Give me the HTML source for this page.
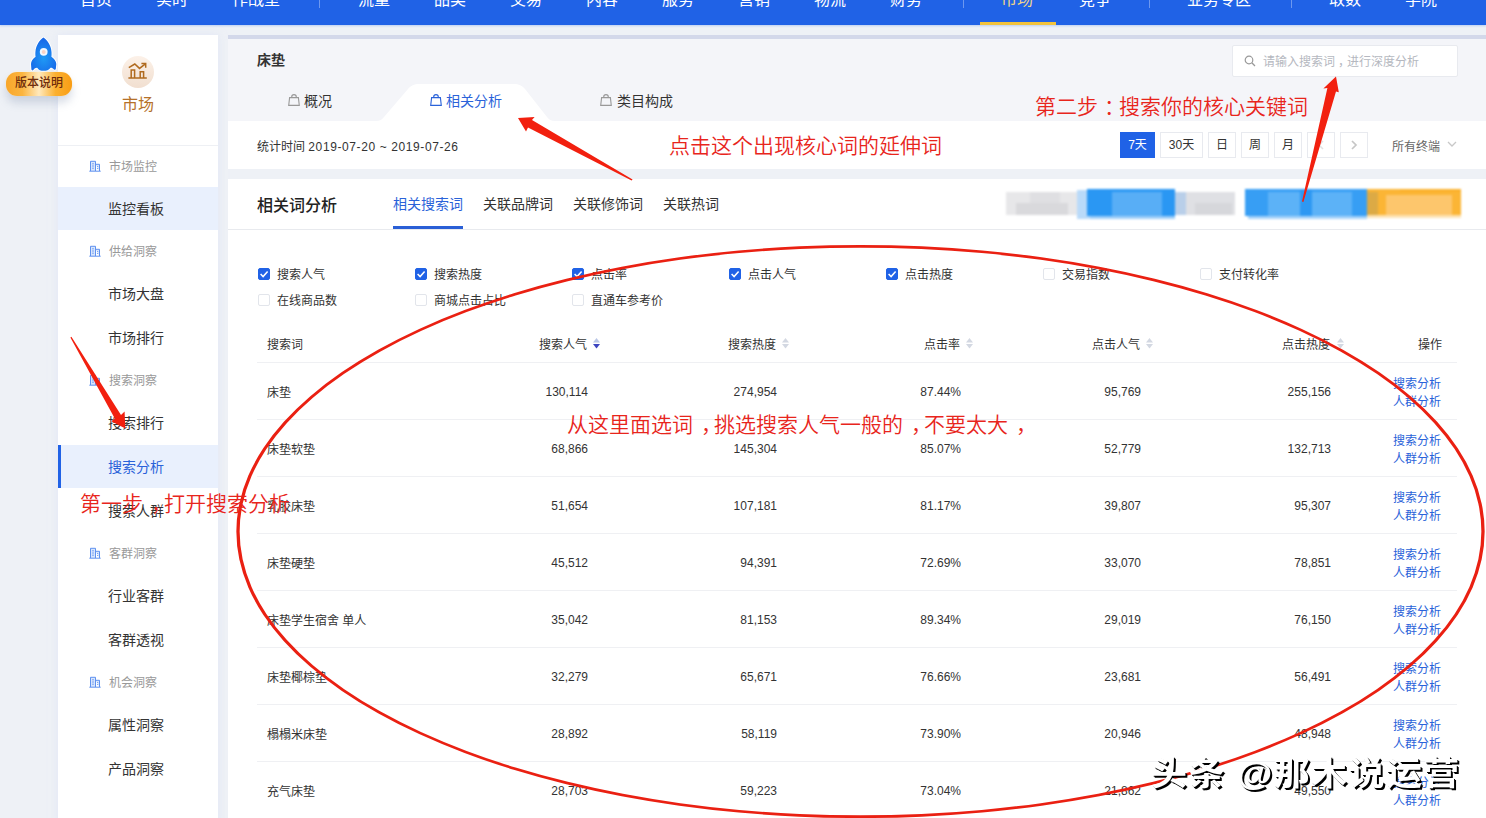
<!DOCTYPE html>
<html lang="zh-CN">
<head>
<meta charset="utf-8">
<title>搜索分析</title>
<style>
*{box-sizing:border-box;margin:0;padding:0}
html,body{width:1486px;height:818px;overflow:hidden}
body{position:relative;background:#eef1f6;font-family:"Liberation Sans","Noto Sans CJK SC",sans-serif;font-size:12px;color:#333;}
.abs{position:absolute;white-space:nowrap}
/* top nav */
#nav{position:absolute;left:0;top:0;width:1486px;height:25px;background:#2062e6;overflow:hidden;box-shadow:0 1px 2px rgba(32,98,230,.25)}
#nav span{position:absolute;top:-12px;font-size:16px;line-height:24px;color:#fff;white-space:nowrap}
#nav i{position:absolute;top:-7px;width:1px;height:15px;background:rgba(255,255,255,.35)}
#nav b{position:absolute;left:980px;top:22px;width:76px;height:3px;background:#f3c33c}
/* sidebar */
#side{position:absolute;left:58px;top:35px;width:160px;height:790px;background:#fff;box-shadow:0 0 8px rgba(215,223,245,.55)}
#side .grp{position:absolute;left:51px;font-size:12px;color:#999;line-height:16px;white-space:nowrap}
#side .it{position:absolute;left:0;width:160px;height:43px;line-height:45px;font-size:14px;color:#333;padding-left:50px;white-space:nowrap}
#side .it.hl{background:#e9f0fd}
#side .it.act{background:#e9f0fd;color:#2a62d9;border-left:3px solid #2062e6;padding-left:47px}
#side svg.gi{position:absolute;left:31px;width:12px;height:12px}

#side .mk{position:absolute;left:64px;top:21px;width:32px;height:32px;border-radius:50%;background:linear-gradient(180deg,#fcf1e8,#f1dfd0)}
#side .mkt{position:absolute;left:0;width:160px;top:58px;text-align:center;font-size:16px;line-height:24px;color:#b5712a}
#side .sdiv{position:absolute;left:0;top:110px;width:160px;height:1px;background:#eef0f4}

#p1 .strip{position:absolute;left:0;top:0;width:100%;height:4px;background:#d3d8ea}
#p1 .hd{position:absolute;left:0;top:4px;width:100%;height:82px;background:#f4f5f9}
#p1 .sb{position:absolute;left:1004px;top:10px;width:226px;height:32px;border:1px solid #e8eaef;background:#fff;border-radius:2px}
#p1 .sb span{position:absolute;left:30px;top:7px;font-size:12px;line-height:18px;color:#b5b8c0;white-space:nowrap}
.btn.on{background:#2062e6;border-color:#2062e6;color:#fff}

.blur{filter:blur(.9px)}
.blur i{position:absolute;top:3px;height:24px}

#badge{position:absolute;left:6px;top:72px;width:66px;height:24px;border-radius:11px;background:linear-gradient(90deg,#f8a62a 0%,#fbb540 25%,#ffe9bd 50%,#fbb030 75%,#f99d14 100%);box-shadow:0 7px 8px rgba(120,135,170,.28),0 0 2px rgba(255,240,200,.9)}
#badge span{position:absolute;left:0;width:66px;top:3px;text-align:center;font-size:12px;line-height:16px;color:#6e2c0c;font-weight:500}
#wm{transform:scaleY(.91);transform-origin:0 41px;position:absolute;left:1151px;top:749px;font-size:36px;line-height:48px;font-weight:700;letter-spacing:1.4px;color:#fff;text-shadow:2px 2px 0 #000,1px 1px 0 #000;white-space:nowrap}
.td.lnk{color:#2a62d9}
/* panels */
.panel{position:absolute;left:228px;width:1270px;background:#fff}
.lnk{color:#2a62d9}
.red{position:absolute;white-space:nowrap;color:#e8251c;font-family:"Liberation Sans","Noto Sans CJK SC",sans-serif;font-weight:350;font-size:21px;line-height:28px}
.tc{position:relative;left:8px}
.cb{position:absolute;width:12px;height:12px;border:1px solid #e2e5eb;border-radius:2px;background:#fff}
.cb.on{background:#2062e6;border-color:#2062e6}
.cbl{position:absolute;font-size:12px;line-height:16px;color:#333;white-space:nowrap}
.th{position:absolute;top:335px;font-size:12px;line-height:16px;color:#333;white-space:nowrap}
.td{position:absolute;font-size:12px;line-height:16px;color:#333;white-space:nowrap;text-align:right}
.hr{position:absolute;left:257px;width:1200px;height:1px;background:#eff0f3}
.btn{position:absolute;height:26px;line-height:25px;border:1px solid #e8eaef;background:#fff;text-align:center;font-size:12px;color:#333}
</style>
</head>
<body>
<div id="nav">
<span style="left:80px">首页</span><span style="left:156px">实时</span><span style="left:232px">作战室</span><i style="left:319px"></i>
<span style="left:358px">流量</span><span style="left:434px">品类</span><span style="left:510px">交易</span><span style="left:586px">内容</span><span style="left:662px">服务</span><span style="left:738px">营销</span><span style="left:814px">物流</span><span style="left:890px">财务</span><i style="left:963px"></i>
<span style="left:1001px;color:#f0d68a">市场</span><span style="left:1079px">竞争</span><i style="left:1149px"></i><span style="left:1187px">业务专区</span><i style="left:1291px"></i><span style="left:1329px">取数</span><span style="left:1405px">学院</span>
<b></b>
</div>

<div id="side">
<div class="mk"></div>
<svg class="mki" viewBox="126 60 24 22" style="position:absolute;left:68px;top:25px;width:24px;height:22px"><g fill="none" stroke="#b06a1e" stroke-width="1.5"><path d="M128.4 78H146.8"/><path d="M131.2 78V69.9H134.6V78M140.2 78V71.7H143.6V78"/><path d="M128.8 67.7L134.8 64 139.5 68.4 145.4 63.8"/><path d="M141.4 63.5H145.7V67.8"/></g></svg>
<div class="mkt">市场</div>
<div class="sdiv"></div>
<svg class="gi" viewBox="0 0 12 12" style="top:125px"><path d="M1.5 11V1.3h5V11M6.5 4.3h4V11M0.3 11.2h11.4" fill="#d9e6fc" stroke="#5f92ef" stroke-width="1"/><path d="M3 3.8h2M3 6h2M3 8.2h2M8 6.5h1.2M8 8.5h1.2" stroke="#6f9df2" stroke-width=".9"/></svg>
<div class="grp" style="top:124px">市场监控</div>
<svg class="gi" viewBox="0 0 12 12" style="top:210px"><path d="M1.5 11V1.3h5V11M6.5 4.3h4V11M0.3 11.2h11.4" fill="#d9e6fc" stroke="#5f92ef" stroke-width="1"/><path d="M3 3.8h2M3 6h2M3 8.2h2M8 6.5h1.2M8 8.5h1.2" stroke="#6f9df2" stroke-width=".9"/></svg>
<div class="grp" style="top:209px">供给洞察</div>
<svg class="gi" viewBox="0 0 12 12" style="top:339px"><path d="M1.5 11V1.3h5V11M6.5 4.3h4V11M0.3 11.2h11.4" fill="#d9e6fc" stroke="#5f92ef" stroke-width="1"/><path d="M3 3.8h2M3 6h2M3 8.2h2M8 6.5h1.2M8 8.5h1.2" stroke="#6f9df2" stroke-width=".9"/></svg>
<div class="grp" style="top:338px">搜索洞察</div>
<svg class="gi" viewBox="0 0 12 12" style="top:512px"><path d="M1.5 11V1.3h5V11M6.5 4.3h4V11M0.3 11.2h11.4" fill="#d9e6fc" stroke="#5f92ef" stroke-width="1"/><path d="M3 3.8h2M3 6h2M3 8.2h2M8 6.5h1.2M8 8.5h1.2" stroke="#6f9df2" stroke-width=".9"/></svg>
<div class="grp" style="top:511px">客群洞察</div>
<svg class="gi" viewBox="0 0 12 12" style="top:641px"><path d="M1.5 11V1.3h5V11M6.5 4.3h4V11M0.3 11.2h11.4" fill="#d9e6fc" stroke="#5f92ef" stroke-width="1"/><path d="M3 3.8h2M3 6h2M3 8.2h2M8 6.5h1.2M8 8.5h1.2" stroke="#6f9df2" stroke-width=".9"/></svg>
<div class="grp" style="top:640px">机会洞察</div>
<div class="it hl" style="top:152px">监控看板</div>
<div class="it " style="top:237px">市场大盘</div>
<div class="it " style="top:281px">市场排行</div>
<div class="it " style="top:366px">搜索排行</div>
<div class="it act" style="top:410px">搜索分析</div>
<div class="it " style="top:454px">搜索人群</div>
<div class="it " style="top:539px">行业客群</div>
<div class="it " style="top:583px">客群透视</div>
<div class="it " style="top:668px">属性洞察</div>
<div class="it " style="top:712px">产品洞察</div>
</div>
<div class="panel" id="p1" style="top:35px;height:134px">
<div class="strip"></div><div class="hd"></div>
<div class="abs" style="left:29px;top:14px;font-size:14px;line-height:22px;font-weight:bold;color:#333">床垫</div>
<svg style="position:absolute;left:140px;top:48px;width:200px;height:38px" viewBox="0 0 200 38"><path d="M8 38 C12 38 14 36.5 16 34 L40 6 C43 2.5 46 1 51 1 L146 1 C151 1 154 2.5 157 6 L179 34 C181 36.5 183 38 187 38 Z" fill="#fff"/></svg>
<svg viewBox="0 0 12 12" style="position:absolute;left:59.5px;top:58.8px;width:12px;height:12px"><path d="M1.6 3.6h8.8l.9 7.8H.7z M3.7 3.6V2.9a2.3 2.3 0 0 1 4.6 0v.7" fill="none" stroke="#999" stroke-width="1.1"/></svg>
<div class="abs" style="left:76px;top:55px;font-size:14px;line-height:22px;color:#333">概况</div>
<svg viewBox="0 0 12 12" style="position:absolute;left:201.5px;top:58.8px;width:12px;height:12px"><path d="M1.6 3.6h8.8l.9 7.8H.7z M3.7 3.6V2.9a2.3 2.3 0 0 1 4.6 0v.7" fill="none" stroke="#2a62d9" stroke-width="1.1"/></svg>
<div class="abs" style="left:218px;top:55px;font-size:14px;line-height:22px;color:#2a62d9">相关分析</div>
<svg viewBox="0 0 12 12" style="position:absolute;left:371.5px;top:58.8px;width:12px;height:12px"><path d="M1.6 3.6h8.8l.9 7.8H.7z M3.7 3.6V2.9a2.3 2.3 0 0 1 4.6 0v.7" fill="none" stroke="#999" stroke-width="1.1"/></svg>
<div class="abs" style="left:389px;top:55px;font-size:14px;line-height:22px;color:#333">类目构成</div>
<div class="abs" style="left:29px;top:103px;font-size:12px;line-height:18px;color:#333">统计时间 <span style="letter-spacing:.6px">2019-07-20 ~ 2019-07-26</span></div>
<div class="sb"><svg viewBox="0 0 12 12" style="position:absolute;left:10.5px;top:9px;width:12px;height:12px"><circle cx="5" cy="5" r="3.8" fill="none" stroke="#999" stroke-width="1.2"/><path d="M7.8 7.8l3.2 3.2" stroke="#999" stroke-width="1.3"/></svg><span>请输入搜索词<b style="font-weight:normal;position:relative;left:3px">，</b>进行深度分析</span></div>
<div class="btn on" style="left:892px;top:97px;width:35px">7天</div>
<div class="btn " style="left:932px;top:97px;width:43px">30天</div>
<div class="btn " style="left:980px;top:97px;width:28px">日</div>
<div class="btn " style="left:1013px;top:97px;width:28px">周</div>
<div class="btn " style="left:1046px;top:97px;width:28px">月</div>
<div class="btn dis" style="left:1079px;top:97px;width:28px"></div>
<div class="btn dis" style="left:1112px;top:97px;width:28px"></div>
<svg style="position:absolute;left:1089px;top:105px;width:8px;height:10px" viewBox="0 0 8 10"><path d="M6 1L2 5l4 4" fill="none" stroke="#e2e2e2" stroke-width="1.6"/></svg>
<svg style="position:absolute;left:1122px;top:105px;width:8px;height:10px" viewBox="0 0 8 10"><path d="M2 1l4 4-4 4" fill="none" stroke="#c6c6c6" stroke-width="1.7"/></svg>
<div class="abs" style="left:1164px;top:103px;font-size:12px;line-height:18px;color:#666">所有终端</div>
<svg style="position:absolute;left:1219px;top:106px;width:10px;height:7px" viewBox="0 0 10 7"><path d="M1 1l4 4 4-4" fill="none" stroke="#c8c8c8" stroke-width="1.3"/></svg>
</div>
<div class="panel" id="p2" style="top:179px;height:650px">
<div class="abs" style="left:29px;top:15px;font-size:16px;line-height:24px;font-weight:500;color:#222">相关词分析</div>
<div class="abs" style="left:165px;top:14px;font-size:14px;line-height:22px;color:#2a62d9">相关搜索词</div>
<div class="abs" style="left:255px;top:14px;font-size:14px;line-height:22px;color:#333">关联品牌词</div>
<div class="abs" style="left:345px;top:14px;font-size:14px;line-height:22px;color:#333">关联修饰词</div>
<div class="abs" style="left:435px;top:14px;font-size:14px;line-height:22px;color:#333">关联热词</div>
<div style="position:absolute;left:165px;top:47px;width:70px;height:3px;background:#2a5fd6"></div>
<div style="position:absolute;left:0;top:50px;width:100%;height:1px;background:#e8eaee"></div>
<svg class="blur" style="position:absolute;left:772px;top:5px;width:470px;height:40px" viewBox="1000 184 470 40"><rect x="1006" y="192" width="71" height="23" fill="#e7e7e9"/><rect x="1016" y="203" width="52" height="12" fill="#d9d9dc"/><rect x="1030" y="192" width="30" height="11" fill="#dfdfe2"/><rect x="1077" y="190" width="13" height="29" fill="#b9daf9"/><rect x="1087" y="189" width="88" height="27" fill="#2a97f3"/><rect x="1112" y="192" width="50" height="24" fill="#58aef6"/><rect x="1090" y="216" width="85" height="3" fill="#9fcff9"/><rect x="1175" y="192" width="60" height="23" fill="#dfe0e4"/><rect x="1175" y="192" width="11" height="23" fill="#b9cfe9"/><rect x="1195" y="203" width="37" height="12" fill="#d6d7db"/><rect x="1245" y="189" width="122" height="27" fill="#379ef4"/><rect x="1268" y="192" width="84" height="24" fill="#5cb2f7"/><rect x="1248" y="216" width="119" height="3" fill="#a6d3fa"/><rect x="1300" y="189" width="12" height="27" fill="#2d98f3"/><rect x="1367" y="189" width="94" height="26" fill="#fbb535"/><rect x="1386" y="195" width="66" height="20" fill="#fdc66c"/><rect x="1367" y="192" width="11" height="23" fill="#dcaa45"/><rect x="1400" y="189" width="61" height="3" fill="#fbb12c"/><rect x="1367" y="215" width="94" height="3" fill="#fde3b4"/></svg>
<div class="cb on" style="left:30px;top:89px"><svg viewBox="0 0 12 12" style="position:absolute;left:-1px;top:-1px;width:12px;height:12px"><path d="M2.6 6l2.5 2.6 4.5-5.2" fill="none" stroke="#fff" stroke-width="1.5"/></svg></div>
<div class="cbl" style="left:49px;top:88px">搜索人气</div>
<div class="cb on" style="left:187px;top:89px"><svg viewBox="0 0 12 12" style="position:absolute;left:-1px;top:-1px;width:12px;height:12px"><path d="M2.6 6l2.5 2.6 4.5-5.2" fill="none" stroke="#fff" stroke-width="1.5"/></svg></div>
<div class="cbl" style="left:206px;top:88px">搜索热度</div>
<div class="cb on" style="left:344px;top:89px"><svg viewBox="0 0 12 12" style="position:absolute;left:-1px;top:-1px;width:12px;height:12px"><path d="M2.6 6l2.5 2.6 4.5-5.2" fill="none" stroke="#fff" stroke-width="1.5"/></svg></div>
<div class="cbl" style="left:363px;top:88px">点击率</div>
<div class="cb on" style="left:501px;top:89px"><svg viewBox="0 0 12 12" style="position:absolute;left:-1px;top:-1px;width:12px;height:12px"><path d="M2.6 6l2.5 2.6 4.5-5.2" fill="none" stroke="#fff" stroke-width="1.5"/></svg></div>
<div class="cbl" style="left:520px;top:88px">点击人气</div>
<div class="cb on" style="left:658px;top:89px"><svg viewBox="0 0 12 12" style="position:absolute;left:-1px;top:-1px;width:12px;height:12px"><path d="M2.6 6l2.5 2.6 4.5-5.2" fill="none" stroke="#fff" stroke-width="1.5"/></svg></div>
<div class="cbl" style="left:677px;top:88px">点击热度</div>
<div class="cb" style="left:815px;top:89px"></div>
<div class="cbl" style="left:834px;top:88px">交易指数</div>
<div class="cb" style="left:972px;top:89px"></div>
<div class="cbl" style="left:991px;top:88px">支付转化率</div>
<div class="cb" style="left:30px;top:115px"></div>
<div class="cbl" style="left:49px;top:114px">在线商品数</div>
<div class="cb" style="left:187px;top:115px"></div>
<div class="cbl" style="left:206px;top:114px">商城点击占比</div>
<div class="cb" style="left:344px;top:115px"></div>
<div class="cbl" style="left:363px;top:114px">直通车参考价</div>
<div class="abs" style="left:39px;top:158px;font-size:12px;line-height:16px;color:#333">搜索词</div>
<div class="td" style="right:911px;top:158px">搜索人气</div>
<svg viewBox="0 0 7 10.5" style="position:absolute;left:365px;top:159px;width:7px;height:10.5px"><path d="M3.5 0L7 4.4H0z" fill="#b9c6e6"/><path d="M3.5 10.4L7 6H0z" fill="#3d46c0"/></svg>
<div class="td" style="right:722px;top:158px">搜索热度</div>
<svg viewBox="0 0 7 10.5" style="position:absolute;left:554px;top:159px;width:7px;height:10.5px"><path d="M3.5 0L7 4.4H0z" fill="#d3d8e2"/><path d="M3.5 10.4L7 6H0z" fill="#d3d8e2"/></svg>
<div class="td" style="right:538px;top:158px">点击率</div>
<svg viewBox="0 0 7 10.5" style="position:absolute;left:738px;top:159px;width:7px;height:10.5px"><path d="M3.5 0L7 4.4H0z" fill="#d3d8e2"/><path d="M3.5 10.4L7 6H0z" fill="#d3d8e2"/></svg>
<div class="td" style="right:358px;top:158px">点击人气</div>
<svg viewBox="0 0 7 10.5" style="position:absolute;left:918px;top:159px;width:7px;height:10.5px"><path d="M3.5 0L7 4.4H0z" fill="#d3d8e2"/><path d="M3.5 10.4L7 6H0z" fill="#d3d8e2"/></svg>
<div class="td" style="right:168px;top:158px">点击热度</div>
<svg viewBox="0 0 7 10.5" style="position:absolute;left:1109px;top:159px;width:7px;height:10.5px"><path d="M3.5 0L7 4.4H0z" fill="#d3d8e2"/><path d="M3.5 10.4L7 6H0z" fill="#d3d8e2"/></svg>
<div class="td" style="right:56px;top:158px">操作</div>
<div class="hr" style="left:29px;top:183px"></div>
<div class="abs" style="left:39px;top:206px;font-size:12px;line-height:16px;color:#333">床垫</div>
<div class="td" style="right:910px;top:205px">130,114</div>
<div class="td" style="right:721px;top:205px">274,954</div>
<div class="td" style="right:537px;top:205px">87.44%</div>
<div class="td" style="right:357px;top:205px">95,769</div>
<div class="td" style="right:167px;top:205px">255,156</div>
<div class="td lnk" style="right:57px;top:196px;line-height:18px">搜索分析<br>人群分析</div>
<div class="hr" style="left:29px;top:240px"></div>
<div class="abs" style="left:39px;top:263px;font-size:12px;line-height:16px;color:#333">床垫软垫</div>
<div class="td" style="right:910px;top:262px">68,866</div>
<div class="td" style="right:721px;top:262px">145,304</div>
<div class="td" style="right:537px;top:262px">85.07%</div>
<div class="td" style="right:357px;top:262px">52,779</div>
<div class="td" style="right:167px;top:262px">132,713</div>
<div class="td lnk" style="right:57px;top:253px;line-height:18px">搜索分析<br>人群分析</div>
<div class="hr" style="left:29px;top:297px"></div>
<div class="abs" style="left:39px;top:320px;font-size:12px;line-height:16px;color:#333">乳胶床垫</div>
<div class="td" style="right:910px;top:319px">51,654</div>
<div class="td" style="right:721px;top:319px">107,181</div>
<div class="td" style="right:537px;top:319px">81.17%</div>
<div class="td" style="right:357px;top:319px">39,807</div>
<div class="td" style="right:167px;top:319px">95,307</div>
<div class="td lnk" style="right:57px;top:310px;line-height:18px">搜索分析<br>人群分析</div>
<div class="hr" style="left:29px;top:354px"></div>
<div class="abs" style="left:39px;top:377px;font-size:12px;line-height:16px;color:#333">床垫硬垫</div>
<div class="td" style="right:910px;top:376px">45,512</div>
<div class="td" style="right:721px;top:376px">94,391</div>
<div class="td" style="right:537px;top:376px">72.69%</div>
<div class="td" style="right:357px;top:376px">33,070</div>
<div class="td" style="right:167px;top:376px">78,851</div>
<div class="td lnk" style="right:57px;top:367px;line-height:18px">搜索分析<br>人群分析</div>
<div class="hr" style="left:29px;top:411px"></div>
<div class="abs" style="left:39px;top:434px;font-size:12px;line-height:16px;color:#333">床垫学生宿舍 单人</div>
<div class="td" style="right:910px;top:433px">35,042</div>
<div class="td" style="right:721px;top:433px">81,153</div>
<div class="td" style="right:537px;top:433px">89.34%</div>
<div class="td" style="right:357px;top:433px">29,019</div>
<div class="td" style="right:167px;top:433px">76,150</div>
<div class="td lnk" style="right:57px;top:424px;line-height:18px">搜索分析<br>人群分析</div>
<div class="hr" style="left:29px;top:468px"></div>
<div class="abs" style="left:39px;top:491px;font-size:12px;line-height:16px;color:#333">床垫椰棕垫</div>
<div class="td" style="right:910px;top:490px">32,279</div>
<div class="td" style="right:721px;top:490px">65,671</div>
<div class="td" style="right:537px;top:490px">76.66%</div>
<div class="td" style="right:357px;top:490px">23,681</div>
<div class="td" style="right:167px;top:490px">56,491</div>
<div class="td lnk" style="right:57px;top:481px;line-height:18px">搜索分析<br>人群分析</div>
<div class="hr" style="left:29px;top:525px"></div>
<div class="abs" style="left:39px;top:548px;font-size:12px;line-height:16px;color:#333">榻榻米床垫</div>
<div class="td" style="right:910px;top:547px">28,892</div>
<div class="td" style="right:721px;top:547px">58,119</div>
<div class="td" style="right:537px;top:547px">73.90%</div>
<div class="td" style="right:357px;top:547px">20,946</div>
<div class="td" style="right:167px;top:547px">48,948</div>
<div class="td lnk" style="right:57px;top:538px;line-height:18px">搜索分析<br>人群分析</div>
<div class="hr" style="left:29px;top:582px"></div>
<div class="abs" style="left:39px;top:605px;font-size:12px;line-height:16px;color:#333">充气床垫</div>
<div class="td" style="right:910px;top:604px">28,703</div>
<div class="td" style="right:721px;top:604px">59,223</div>
<div class="td" style="right:537px;top:604px">73.04%</div>
<div class="td" style="right:357px;top:604px">21,862</div>
<div class="td" style="right:167px;top:604px">49,550</div>
<div class="td lnk" style="right:57px;top:595px;line-height:18px">搜索分析<br>人群分析</div>
<div class="hr" style="left:29px;top:639px"></div>
</div>
<svg id="rocket" viewBox="26 34 36 40" style="position:absolute;left:26px;top:34px;width:36px;height:40px">
<defs><radialGradient id="rg" cx="0.5" cy="0.62" r="0.6"><stop offset="0" stop-color="#1f9af5"/><stop offset="1" stop-color="#1767e8"/></radialGradient></defs>
<path d="M43.4 37.6 C47 40 51 45 51.5 52 C51.6 54 51.6 55.5 51.4 56.7 C54 58.5 56.3 61 56.3 64 L55.8 69 C55.6 70 54.5 70 54 69.4 C52.8 68.2 51.5 67.6 50.3 67.9 C49 70 46.5 70.8 43.6 70.8 C40.7 70.8 38.5 70 37.4 67.9 C36 67.6 34.5 68.5 33.3 70 C32.8 70.6 31.6 70.6 31.4 69.6 L31 64 C31 61 33 58.5 35.6 56.7 C35.3 55.5 35.3 54 35.4 52 C36 45 39.8 40 43.4 37.6Z" fill="url(#rg)" stroke="#fff" stroke-width="1.8" stroke-linejoin="round" paint-order="stroke"/>
<circle cx="43.7" cy="51.8" r="3.9" fill="#f2f8ff"/><circle cx="43.7" cy="51.9" r="2" fill="#f9d3c6"/>
</svg>
<div id="badge"><span>版本说明</span></div>
<svg id="anno" viewBox="0 0 1486 818" style="position:absolute;left:0;top:0;width:1486px;height:818px;pointer-events:none">
<path d="M236.35 531.50 A624.15 286.55 0 0 1 860.50 244.95 A624.15 286.55 0 0 1 1484.65 531.50 A624.15 286.55 0 0 1 860.50 818.05 A624.15 286.55 0 0 1 236.35 531.50Z M239.65 531.50 A620.85 283.85 0 0 1 860.50 247.65 A620.85 283.85 0 0 1 1481.35 531.50 A620.85 283.85 0 0 1 860.50 815.35 A620.85 283.85 0 0 1 239.65 531.50Z" fill="#ea2012" fill-rule="evenodd"/>
<path d="M518 118 L534.6 117 L532 120 L632.6 179.6 L631.6 180.6 L528 127.5 L526 131.5Z" fill="#f2200f"/>
<path d="M1336 76.5 L1323.4 88.5 L1327.4 88 L1302 201.6 L1303.4 202 L1336 91.4 L1338.8 92.3Z" fill="#f2200f"/>
<path d="M125.3 428.4 L124.6 411.5 L121 415 L71.4 336.8 L70.4 337.6 L114.8 418.5 L111.3 421.3Z" fill="#f2200f"/>
</svg>
<div class="red" style="left:1035px;top:93px">第二步<span style="position:relative;left:6px">：</span>搜索你的核心关键词</div>
<div class="red" style="left:669px;top:132px">点击这个出现核心词的延伸词</div>
<div class="red" style="left:567px;top:411px">从这里面选词<span class="tc">，</span>挑选搜索人气一般的<span class="tc">，</span>不要太大<span class="tc">，</span></div>
<div class="red" style="left:80px;top:490px">第一步<span class="tc">，</span>打开搜索分析</div>
<div id="wm">头条 @那木说运营</div>
</body>
</html>
